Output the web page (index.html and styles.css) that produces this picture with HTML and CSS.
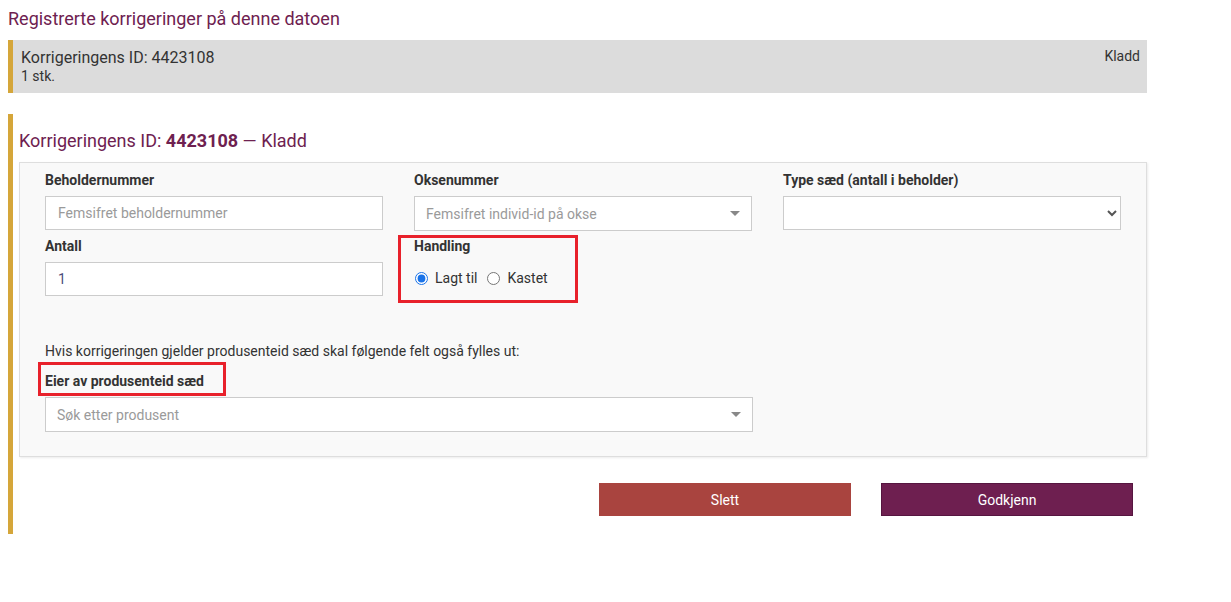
FILE: index.html
```html
<!DOCTYPE html>
<html lang="no">
<head>
<meta charset="utf-8">
<title>Korrigeringer</title>
<link rel="stylesheet" href="styles.css">
</head>
<body>
<div class="page">
  <h3 class="page-title">Registrerte korrigeringer på denne datoen</h3>

  <div class="summary">
    <div class="summary-main">
      <div class="summary-id">Korrigeringens ID: 4423108</div>
      <div class="summary-count">1 stk.</div>
    </div>
    <div class="summary-status">Kladd</div>
  </div>

  <section class="entry">
    <h3 class="entry-title">Korrigeringens ID: <strong>4423108</strong> — Kladd</h3>

    <div class="panel">
      <div class="grid">
        <div class="field">
          <label class="label">Beholdernummer</label>
          <input class="input" type="text" placeholder="Femsifret beholdernummer">
        </div>
        <div class="field">
          <label class="label">Oksenummer</label>
          <div class="combo">
            <span class="combo-placeholder">Femsifret individ-id på okse</span>
            <span class="caret"></span>
          </div>
        </div>
        <div class="field">
          <label class="label">Type sæd (antall i beholder)</label>
          <select class="select"><option></option></select>
        </div>
        <div class="field">
          <label class="label">Antall</label>
          <input class="input input-value" type="text" value="1">
        </div>
        <div class="field annotated">
          <label class="label">Handling</label>
          <div class="radios">
            <label class="radio"><input type="radio" name="handling" checked> Lagt til</label>
            <label class="radio"><input type="radio" name="handling"> Kastet</label>
          </div>
          <span class="mark mark-handling"></span>
        </div>
      </div>

      <p class="hint">Hvis korrigeringen gjelder produsenteid sæd skal følgende felt også fylles ut:</p>
      <div class="field owner annotated">
        <label class="label">Eier av produsenteid sæd</label>
        <div class="combo">
          <span class="combo-placeholder">Søk etter produsent</span>
          <span class="caret"></span>
        </div>
        <span class="mark mark-owner"></span>
      </div>
    </div>

    <div class="actions">
      <button class="btn btn-delete" type="button">Slett</button>
      <button class="btn btn-approve" type="button">Godkjenn</button>
    </div>
  </section>
</div>
</body>
</html>
```

FILE: styles.css
```css
* { box-sizing: border-box; }

body {
  margin: 0;
  font-family: Roboto, "Liberation Sans", Arial, sans-serif;
  font-size: 14px;
  color: #333;
  background: #fff;
}

.page {
  width: 1147px;
  padding-left: 8px;
}

.page-title {
  margin: 0;
  padding-top: 8px;
  height: 40px;
  font-size: 18px;
  line-height: 21px;
  font-weight: 400;
  color: #6e2150;
}

.summary {
  display: flex;
  justify-content: space-between;
  background: #dcdcdc;
  border-left: 5px solid #d5a63a;
  padding: 8px 7px 0 8px;
  height: 53px;
}

.summary-id {
  font-size: 16px;
  line-height: 19px;
}

.summary-count {
  font-size: 14px;
  line-height: 19px;
}

.summary-status {
  font-size: 14px;
  line-height: 16px;
}

.entry {
  margin-top: 21px;
  border-left: 5px solid #d5a63a;
  padding: 16px 0 18px 6px;
}

.entry-title {
  margin: 0 0 10px;
  font-size: 18px;
  line-height: 22px;
  font-weight: 400;
  color: #6e2150;
}

.entry-title strong {
  font-weight: 700;
}

.panel {
  background: #f9f9f9;
  border: 1px solid #dedede;
  box-shadow: 1px 1px 2px rgba(0, 0, 0, 0.08);
  padding: 7px 25px 24px 25px;
}

.grid {
  display: grid;
  grid-template-columns: 338px 338px 338px;
  column-gap: 31px;
  row-gap: 5px;
}

.field {
  display: flex;
  flex-direction: column;
}

.annotated {
  position: relative;
}

.label {
  font-weight: 700;
  font-size: 14px;
  line-height: 20px;
  margin-bottom: 6px;
  color: #333;
}

.input {
  height: 34px;
  border: 1px solid #ccc;
  background: #fff;
  padding: 0 12px;
  font: inherit;
  font-size: 14px;
  color: #555;
  outline: none;
}

.input::placeholder {
  color: #9a9a9a;
}

.input-value {
  color: #4d4d7a;
}

.combo {
  height: 35px;
  border: 1px solid #ccc;
  background: #fff;
  display: flex;
  align-items: center;
  justify-content: space-between;
  padding: 0 11px 0 11px;
}

.combo-placeholder {
  color: #9a9a9a;
}

.caret {
  width: 0;
  height: 0;
  border-left: 5px solid transparent;
  border-right: 5px solid transparent;
  border-top: 5px solid #888;
}

.select {
  height: 34px;
  border: 1px solid #ccc;
  background: #fff;
  font: inherit;
  color: #555;
  padding: 0 6px;
}

.radios {
  display: flex;
  align-items: center;
  gap: 9px;
  margin-top: 6px;
  line-height: 20px;
}

.radio {
  display: flex;
  align-items: center;
  gap: 7px;
  color: #333;
}

.radio input {
  margin: 0 0 0 1px;
  width: 13px;
  height: 13px;
  accent-color: #1a73e8;
}

.hint {
  margin: 45px 0 0;
  line-height: 20px;
  color: #333;
}

.owner {
  width: 708px;
  margin-top: 10px;
}

.mark {
  position: absolute;
  border: 3px solid #e8212b;
  pointer-events: none;
}

.mark-handling {
  left: -16px;
  top: -1px;
  width: 180px;
  height: 68px;
}

.mark-owner {
  left: -7px;
  top: -9px;
  width: 188px;
  height: 34px;
}

.actions {
  display: flex;
  justify-content: flex-end;
  gap: 30px;
  margin-top: 26px;
  padding-right: 14px;
}

.btn {
  width: 252px;
  height: 33px;
  font-family: Roboto, "Liberation Sans", Arial, sans-serif;
  font-size: 14px;
  font-weight: 400;
  color: #fff;
  border: 1px solid transparent;
  border-radius: 0;
  cursor: pointer;
}

.btn-delete {
  background: #a9443f;
  border-color: #a9443f;
}

.btn-approve {
  background: #6e1f50;
  border-color: #561540;
}
```
